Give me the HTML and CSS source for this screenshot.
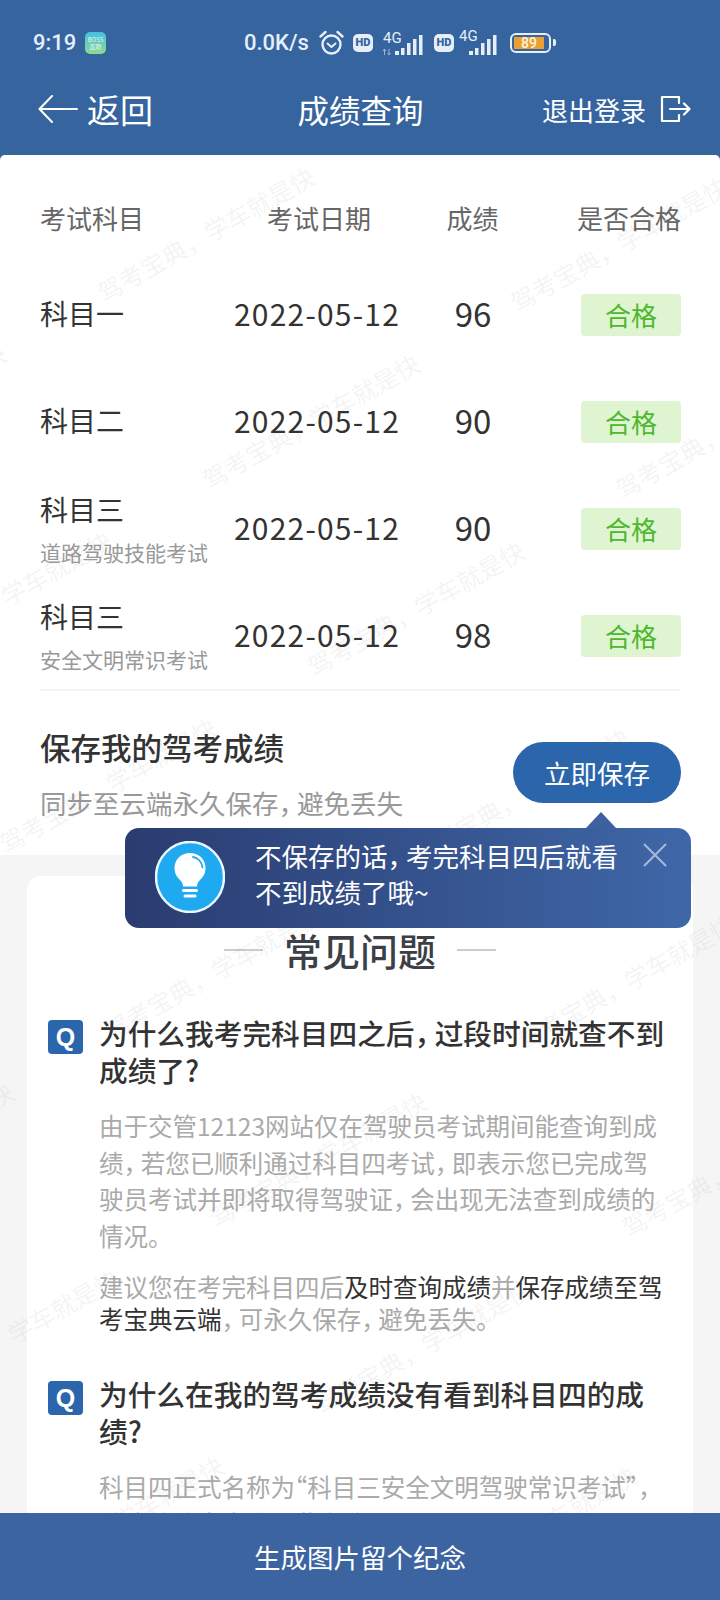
FILE: index.html
```html
<!DOCTYPE html>
<html lang="zh">
<head>
  <meta charset="UTF-8">
  <meta name="viewport" content="width=device-width, initial-scale=1.0">
  <title>成绩查询</title>
  <link rel="stylesheet" href="styles.css">
</head>
<body>
<div class="page">
  <header class="topbar">
    <div class="status">
      <span class="status_time">9:19</span>
      <span class="status_app"><i>BOSS</i><i>直聘</i></span>
      <span class="status_speed">0.0K/s</span>
      <svg class="ic_alarm" viewBox="0 0 25 26" width="25" height="26" fill="none" stroke="#e6eefa">
        <circle cx="12.5" cy="14.5" r="9" stroke-width="2.4"/>
        <path d="M1.5 6.5 6.5 2M23.5 6.5 18.500 2" stroke-width="2.4" stroke-linecap="round"/>
        <path d="M8.500 13.500 12.500 17 16.500 13.500" stroke-width="2" stroke-linecap="round" stroke-linejoin="round"/>
      </svg>
      <span class="status_hd">HD</span>
      <svg class="ic_signal" viewBox="0 0 44 26" width="44" height="26">
        <text class="signal_text" x="1" y="13">4G</text>
        <path d="M2.500 25V19M1 21l1.500-2 1.500 2M7 19v6M5.500 23l1.500 2 1.500-2" stroke="#9fb5d6" fill="none"/>
        <rect x="13" y="21" width="4" height="4" fill="#e6eefa"/>
        <rect x="19" y="18" width="3.500" height="7" fill="#e6eefa"/>
        <rect x="25" y="13" width="3.500" height="12" fill="#e6eefa"/>
        <rect x="31" y="9" width="3.500" height="16" fill="#e6eefa"/>
        <rect x="37" y="5" width="3.500" height="20" fill="#e6eefa"/>
      </svg>
      <span class="status_hd status_hd2">HD</span>
      <svg class="ic_signal ic_signal2" viewBox="0 0 41 26" width="41" height="26">
        <text class="signal_text" x="0" y="11">4G</text>
        <rect x="10" y="21" width="4" height="4" fill="#e6eefa"/>
        <rect x="16" y="18" width="3.500" height="7" fill="#e6eefa"/>
        <rect x="22" y="13" width="3.500" height="12" fill="#e6eefa"/>
        <rect x="28" y="9" width="3.500" height="16" fill="#e6eefa"/>
        <rect x="34" y="5" width="3.500" height="20" fill="#e6eefa"/>
      </svg>
      <span class="battery"><span class="battery_fill">89</span></span>
      <span class="battery_nub"></span>
    </div>
    <nav class="navbar">
      <a class="nav_back">
        <svg viewBox="0 0 40 28" width="40" height="28" fill="none" stroke="#fff" stroke-width="2" stroke-linecap="round" stroke-linejoin="round">
          <path d="M39 14H2M14 1 1.500 14 14 27"/>
        </svg>
        <span>返回</span>
      </a>
      <span class="nav_title">成绩查询</span>
      <a class="nav_logout">
        <span>退出登录</span>
        <svg viewBox="0 0 31 28" width="31" height="28" fill="none" stroke="#fff" stroke-width="2.200" stroke-linejoin="round" stroke-linecap="round">
          <path d="M19 2H2V26H19V20M19 8V2M10 14H29M24 8.500 29.500 14 24 19.500"/>
        </svg>
      </a>
    </nav>
  </header>

  <main class="content">
    <section class="grades">
      <div class="grade_head">
        <span class="col_name">考试科目</span>
        <span class="col_date">考试日期</span>
        <span class="col_score">成绩</span>
        <span class="col_result">是否合格</span>
      </div>
      <div class="grade_row">
        <div class="col_name"><div class="subject">科目一</div></div>
        <div class="col_date grade_date">2022-05-12</div>
        <div class="col_score grade_score">96</div>
        <div class="col_result"><span class="pass">合格</span></div>
      </div>
      <div class="grade_row">
        <div class="col_name"><div class="subject">科目二</div></div>
        <div class="col_date grade_date">2022-05-12</div>
        <div class="col_score grade_score">90</div>
        <div class="col_result"><span class="pass">合格</span></div>
      </div>
      <div class="grade_row">
        <div class="col_name"><div class="subject">科目三</div><div class="subject_note">道路驾驶技能考试</div></div>
        <div class="col_date grade_date">2022-05-12</div>
        <div class="col_score grade_score">90</div>
        <div class="col_result"><span class="pass">合格</span></div>
      </div>
      <div class="grade_row">
        <div class="col_name"><div class="subject">科目三</div><div class="subject_note">安全文明常识考试</div></div>
        <div class="col_date grade_date">2022-05-12</div>
        <div class="col_score grade_score">98</div>
        <div class="col_result"><span class="pass">合格</span></div>
      </div>
    </section>

    <section class="save">
      <div>
        <h2 class="save_title">保存我的驾考成绩</h2>
        <p class="save_desc">同步至云端永久保存<span class="cm">，</span>避免丢失</p>
      </div>
      <button class="save_btn">立即保存</button>
      <div class="tip">
        <svg class="tip_icon" viewBox="0 0 70 72" width="70" height="72">
          <ellipse cx="35" cy="36" rx="34" ry="35" fill="#1fa9f0" stroke="#eaf7ff" stroke-width="2.500"/>
          <path d="M35 12c-9 0-15.500 6.500-15.500 15 0 5.500 2.500 9 5.500 12 2 2 3 4 3 6.500h14c0-2.500 1-4.500 3-6.500 3-3 5.500-6.500 5.500-12 0-8.500-6.500-15-15.500-15z" fill="#fff"/>
          <path d="M38 16c5 .8 9 5 9.500 10.500" fill="none" stroke="#1fa9f0" stroke-width="1.800" stroke-linecap="round"/>
          <path d="M28.500 49.500h13M30 55h10" stroke="#fff" stroke-width="3" stroke-linecap="round"/>
        </svg>
        <p class="tip_text">不保存的话<span class="cm">，</span>考完科目四后就看不到成绩了哦~</p>
        <svg class="tip_close" viewBox="0 0 24 24" width="24" height="24" fill="none" stroke="#aab8dd" stroke-width="2">
          <path d="M1 1 23 23M23 1 1 23"/>
        </svg>
      </div>
    </section>

    <section class="faq">
      <h2 class="faq_title">常见问题</h2>
      <div class="faq_item">
        <span class="faq_q">Q</span>
        <div class="faq_body">
          <h3 class="faq_ask">为什么我考完科目四之后<span class="cm">，</span>过段时间就查不到成绩了?</h3>
          <p class="faq_text">由于交管12123网站仅在驾驶员考试期间能查询到成绩<span class="cm">，</span>若您已顺利通过科目四考试<span class="cm">，</span>即表示您已完成驾驶员考试并即将取得驾驶证<span class="cm">，</span>会出现无法查到成绩的情况。</p>
          <p class="faq_text faq_text2">建议您在考完科目四后<b>及时查询成绩</b>并<b>保存成绩至驾考宝典云端</b><span class="cm">，</span>可永久保存<span class="cm">，</span>避免丢失。</p>
        </div>
      </div>
      <div class="faq_item">
        <span class="faq_q">Q</span>
        <div class="faq_body">
          <h3 class="faq_ask">为什么在我的驾考成绩没有看到科目四的成绩?</h3>
          <p class="faq_text">科目四正式名称为<span class="qt">“</span>科目三安全文明驾驶常识考试<span class="qt">”</span><span class="cm">，</span>在成绩信息中会以此名称显示。</p>
        </div>
      </div>
    </section>

    <svg class="watermark" viewBox="0 0 720 1358" width="720" height="1358">
      <!-- 水印，y 已减去内容区顶部 155 -->
      <text transform="translate(104 138) rotate(-29.400)">驾考宝典，学车就是快</text>
      <text transform="translate(517 148) rotate(-29.400)">驾考宝典，学车就是快</text>
      <text transform="translate(-204 315) rotate(-29.400)">驾考宝典，学车就是快</text>
      <text transform="translate(209 325) rotate(-29.400)">驾考宝典，学车就是快</text>
      <text transform="translate(622 335) rotate(-29.400)">驾考宝典，学车就是快</text>
      <text transform="translate(-99 502) rotate(-29.400)">驾考宝典，学车就是快</text>
      <text transform="translate(314 512) rotate(-29.400)">驾考宝典，学车就是快</text>
      <text transform="translate(6 689) rotate(-29.400)">驾考宝典，学车就是快</text>
      <text transform="translate(419 699) rotate(-29.400)">驾考宝典，学车就是快</text>
      <text transform="translate(111 876) rotate(-29.400)">驾考宝典，学车就是快</text>
      <text transform="translate(524 886) rotate(-29.400)">驾考宝典，学车就是快</text>
      <text transform="translate(-197 1053) rotate(-29.400)">驾考宝典，学车就是快</text>
      <text transform="translate(216 1063) rotate(-29.400)">驾考宝典，学车就是快</text>
      <text transform="translate(629 1073) rotate(-29.400)">驾考宝典，学车就是快</text>
      <text transform="translate(-92 1240) rotate(-29.400)">驾考宝典，学车就是快</text>
      <text transform="translate(321 1250) rotate(-29.400)">驾考宝典，学车就是快</text>
      <text transform="translate(13 1427) rotate(-29.400)">驾考宝典，学车就是快</text>
      <text transform="translate(426 1437) rotate(-29.400)">驾考宝典，学车就是快</text>
    </svg>
  </main>

  <footer class="bottom_btn">生成图片留个纪念</footer>
</div>
</body>
</html>
```

FILE: styles.css
```css
* {
    box-sizing: border-box;
}

body {
    margin: 0;
    background: #f5f5f5;
    color: #333;
    font-family: "Noto Sans CJK SC", "Noto Sans", sans-serif;
}

h2, h3, p {
    margin: 0;
    font-weight: normal;
}

.page {
    display: flex;
    flex-direction: column;
    width: 720px;
    height: 1600px;
    overflow: hidden;
}

/* 逗号比全角窄一些 */
.cm {
    letter-spacing: -0.3em;
}

/* 引号用半宽 */
.qt {
    font-feature-settings: "halt";
}

/* 顶部蓝色栏 */
.topbar {
    flex: none;
    height: 165px;
    background: #36649f;
    color: #fff;
}

.status {
    display: flex;
    align-items: center;
    height: 85px;
    padding-left: 33px;
    color: #e6eefa;
}

.status_time {
    width: 44px;
    font-family: "Roboto", sans-serif;
    font-size: 22px;
    font-weight: 500;
}

.status_app {
    display: flex;
    flex-direction: column;
    align-items: center;
    justify-content: center;
    width: 21px;
    height: 22px;
    margin-left: 8px;
    border-radius: 5px;
    background: linear-gradient(#45bfe6, #8edc8e);
    color: #e6f5ee;
    font-size: 6px;
    line-height: 7px;
}

.status_app i {
    font-style: normal;
}

.status_speed {
    width: 70px;
    margin-left: 138px;
    font-family: "Roboto", sans-serif;
    font-size: 22px;
    font-weight: 500;
    white-space: nowrap;
}

.ic_alarm {
    margin-left: 5px;
}

.status_hd {
    width: 20px;
    height: 18px;
    margin-left: 9px;
    border-radius: 5px;
    background: #e6eefa;
    color: #36649f;
    font-family: "Roboto", sans-serif;
    font-size: 11px;
    font-weight: 900;
    line-height: 18px;
    text-align: center;
}

.ic_signal {
    margin-left: 9px;
}

.signal_text {
    fill: #e6eefa;
    font-family: "Roboto", sans-serif;
    font-size: 15px;
}

.status_hd2 {
    margin-left: 8px;
}

.ic_signal2 {
    margin-left: 5px;
}

.battery {
    display: flex;
    width: 41px;
    height: 20px;
    margin-left: 10px;
    padding: 2px 5px 2px 2px;
    border: 2px solid #e6eefa;
    border-radius: 6px;
}

.battery_fill {
    flex: 1;
    background: #e8a030;
    color: #fdf3df;
    font-family: "Roboto", sans-serif;
    font-size: 14px;
    font-weight: 500;
    line-height: 12px;
    text-align: center;
}

.battery_nub {
    width: 3px;
    height: 7px;
    margin-left: 2px;
    border-radius: 0 2px 2px 0;
    background: #e6eefa;
}

.navbar {
    display: grid;
    grid-template-columns: 1fr auto 1fr;
    align-items: center;
    height: 48px;
    padding: 0 29px 0 38px;
}

.nav_back {
    display: flex;
    align-items: center;
    gap: 9px;
    font-size: 33px;
}

.nav_title {
    margin-right: 8px;
    font-size: 31.500px;
}

.nav_logout {
    display: flex;
    align-items: center;
    justify-content: flex-end;
    gap: 14px;
    font-size: 26px;
}

/* 内容区 */
.content {
    position: relative;
    flex: 1;
    min-height: 0;
    margin-top: -10px;
    overflow: hidden;
    border-radius: 5px 5px 0 0;
}

.grades {
    padding: 0 39px;
    background: #fff;
}

.grades::after {
    content: "";
    display: block;
    height: 2px;
    background: #f5f5f5;
}

.grade_head,
.grade_row {
    display: grid;
    grid-template-columns: 190px 180px 127px 145px;
    align-items: center;
}

.grade_head {
    height: 106px;
    padding-top: 18px;
    color: #666;
    font-size: 26px;
}

.grade_row {
    height: 107px;
}

.col_name {
    padding-left: 1px;
}

.grade_row .col_name {
    padding-bottom: 3px;
}

.col_date,
.col_score {
    text-align: center;
}

.col_result {
    text-align: right;
    white-space: nowrap;
}

.subject {
    font-size: 28px;
    line-height: 38px;
}

.subject_note {
    margin-top: 11px;
    color: #999;
    font-size: 21px;
    line-height: 26px;
    white-space: nowrap;
}

.grade_date {
    padding: 0 4px 4px 0;
    font-size: 30px;
    letter-spacing: 1.200px;
}

.grade_score {
    padding: 0 0 4px 1px;
    font-size: 33px;
}

.pass {
    display: inline-block;
    width: 100px;
    height: 42px;
    border-radius: 4px;
    background: #dff4d0;
    color: #4cb82e;
    font-size: 26px;
    line-height: 42px;
    text-align: center;
}

.save {
    position: relative;
    display: flex;
    justify-content: space-between;
    align-items: flex-start;
    height: 164px;
    padding: 37px 39px 0 40px;
    background: #fff;
}

.save_title {
    color: #333;
    font-size: 30.500px;
    font-weight: 500;
    line-height: 38px;
}

.save_desc {
    margin-top: 19px;
    color: #999;
    font-size: 26.500px;
    line-height: 36px;
}

.save_btn {
    width: 168px;
    height: 61px;
    margin-top: 14px;
    border: none;
    border-radius: 31px;
    background: #2b66ad;
    color: #fff;
    font-family: inherit;
    font-size: 26.500px;
}

.tip {
    position: absolute;
    left: 125px;
    top: 137px;
    z-index: 1;
    display: flex;
    align-items: center;
    width: 566px;
    height: 100px;
    padding-left: 30px;
    border-radius: 14px;
    background: linear-gradient(90deg, #2a3c70, #3f67a8);
    color: #fff;
}

.tip::before {
    content: "";
    position: absolute;
    left: 461px;
    top: -16px;
    border: 15px solid transparent;
    border-top-width: 0;
    border-bottom: 16px solid #3c60a0;
}

.tip_icon {
    margin-bottom: 3px;
}

.tip_text {
    width: 372px;
    margin-left: 30px;
    padding-bottom: 8px;
    font-size: 26.500px;
    line-height: 36px;
}

.tip_close {
    align-self: flex-start;
    margin: 15px 0 0 16px;
}

.faq {
    height: 900px;
    margin: 21px 27px 0;
    padding: 52px 26px 0 21px;
    border-radius: 14px;
    background: #fff;
}

.faq_title {
    display: flex;
    justify-content: center;
    align-items: center;
    gap: 21px;
    margin-left: 5px;
    color: #3c3f46;
    font-size: 38px;
    font-weight: 500;
    line-height: 44px;
}

.faq_title::before,
.faq_title::after {
    content: "";
    width: 39px;
    height: 1.500px;
    background: #ccc;
}

.faq_item {
    display: flex;
    gap: 16px;
    margin-top: 40px;
}

.faq_title + .faq_item {
    margin-top: 42px;
}

.faq_q {
    flex: none;
    width: 35px;
    height: 34px;
    margin-top: 6px;
    border-radius: 4px;
    background: #2b66ad;
    color: #fff;
    font-family: "Liberation Sans", sans-serif;
    font-size: 25px;
    font-weight: 700;
    line-height: 34px;
    text-align: center;
}

.faq_ask {
    font-size: 28.700px;
    font-weight: 500;
    line-height: 37px;
}

.faq_text {
    margin-top: 20px;
    color: #aaa;
    font-size: 24.500px;
    line-height: 36.500px;
}

.faq_text2 {
    margin-top: 17px;
    line-height: 32px;
}

.faq_text b {
    color: #333;
    font-weight: normal;
}

/* 水印铺满内容区 */
.watermark {
    position: absolute;
    left: 0;
    top: 10px;
    z-index: 2;
    pointer-events: none;
}

.watermark text {
    fill: rgba(90, 90, 90, 0.08);
    font-size: 24.500px;
}

.bottom_btn {
    position: relative;
    z-index: 3;
    flex: none;
    height: 87px;
    background: #3c64a0;
    color: #fff;
    font-size: 26.500px;
    line-height: 87px;
    text-align: center;
}
```
